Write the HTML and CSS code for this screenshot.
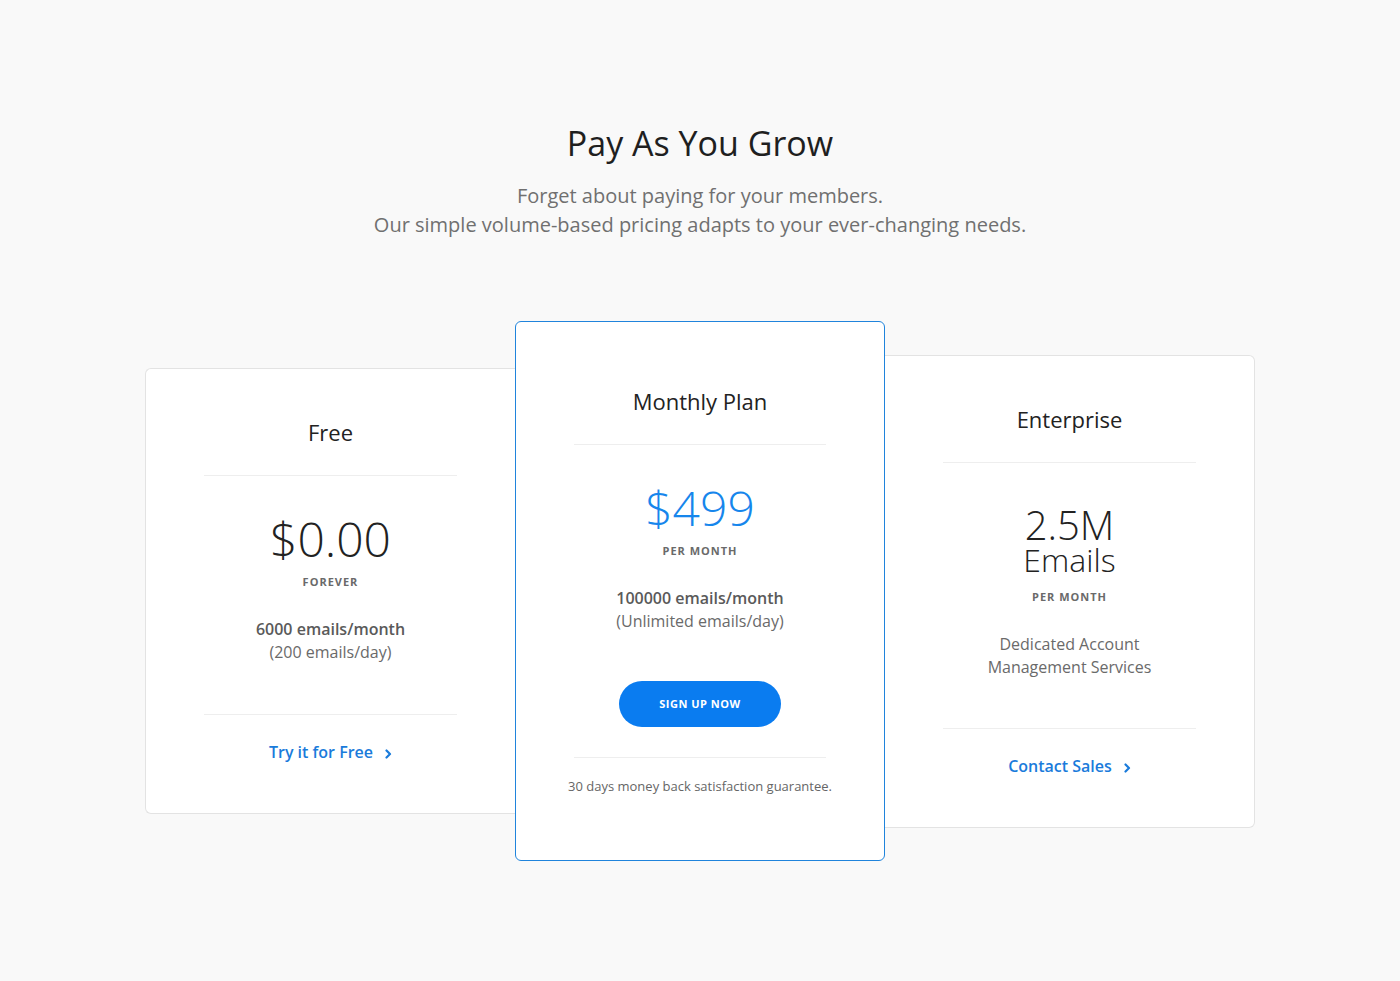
FILE: index.html
```html
<!DOCTYPE html>
<html lang="en">
<head>
<meta charset="utf-8">
<title>Pay As You Grow</title>
<link rel="stylesheet" href="styles.css">
</head>
<body>
<section class="pricing">
  <h1 class="pricing-title">Pay As You Grow</h1>
  <p class="pricing-lead">Forget about paying for your members.<br>Our simple volume-based pricing adapts to your ever-changing needs.</p>

  <div class="plans">
    <div class="plan plan-left">
      <div class="plan-head"><h2 class="plan-name">Free</h2></div>
      <div class="plan-body">
        <div class="plan-price">$0.00</div>
        <div class="plan-period">FOREVER</div>
        <p class="plan-desc"><span class="strong">6000 emails/month</span><br>(200 emails/day)</p>
      </div>
      <div class="plan-foot">
        <a class="plan-link" href="#">Try it for Free<svg class="chev" width="7" height="10" viewBox="0 0 7 10"><polyline points="1.5,1.5 5,5 1.5,8.5" fill="none" stroke="currentColor" stroke-width="2.2" stroke-linecap="round" stroke-linejoin="round"/></svg></a>
      </div>
    </div>

    <div class="plan plan-featured">
      <div class="plan-head"><h2 class="plan-name">Monthly Plan</h2></div>
      <div class="plan-body">
        <div class="plan-price price-blue">$499</div>
        <div class="plan-period">PER MONTH</div>
        <p class="plan-desc"><span class="strong">100000 emails/month</span><br>(Unlimited emails/day)</p>
        <a class="btn-signup" href="#">SIGN UP NOW</a>
      </div>
      <div class="plan-foot">
        <p class="guarantee">30 days money back satisfaction guarantee.</p>
      </div>
    </div>

    <div class="plan plan-right">
      <div class="plan-head"><h2 class="plan-name">Enterprise</h2></div>
      <div class="plan-body body-ent">
        <div class="ent-amount">2.5M</div>
        <div class="ent-unit">Emails</div>
        <div class="plan-period period-ent">PER MONTH</div>
        <p class="plan-desc">Dedicated Account<br>Management Services</p>
      </div>
      <div class="plan-foot">
        <a class="plan-link" href="#">Contact Sales<svg class="chev" width="7" height="10" viewBox="0 0 7 10"><polyline points="1.5,1.5 5,5 1.5,8.5" fill="none" stroke="currentColor" stroke-width="2.2" stroke-linecap="round" stroke-linejoin="round"/></svg></a>
      </div>
    </div>
  </div>
</section>
</body>
</html>
```

FILE: styles.css
```css
html, body {
  margin: 0;
  padding: 0;
  background: #f9f9f9;
  min-height: 100%;
}
body {
  font-family: "Open Sans", "Liberation Sans", sans-serif;
  color: #222;
  -webkit-font-smoothing: antialiased;
}
.pricing {
  padding-top: 123px;
  padding-bottom: 120px;
  text-align: center;
}
.pricing-title {
  margin: 0;
  font-size: 34px;
  line-height: 40px;
  font-weight: 400;
  color: #1f1f1f;
}
.pricing-lead {
  margin: 18px 0 0;
  font-size: 20px;
  line-height: 29px;
  font-weight: 400;
  color: #707070;
}
.plans {
  width: 1110px;
  margin: 82px auto 0;
  display: flex;
  align-items: center;
}
.plan {
  width: 370px;
  box-sizing: border-box;
  background: #fff;
  border: 1px solid #e3e3e3;
  padding: 0 58px;
}
.plan-left {
  border-right: 0;
  border-radius: 6px 0 0 6px;
}
.plan-right {
  border-left: 0;
  border-radius: 0 6px 6px 0;
}
.plan-featured {
  border: 1px solid #2084dc;
  border-radius: 6px;
  position: relative;
  z-index: 1;
}
.plan-head {
  padding: 48px 0 28px;
  border-bottom: 1px solid #eeeeee;
}
.plan-featured .plan-head {
  padding-top: 64px;
}
.plan-name {
  margin: 0;
  font-size: 22px;
  line-height: 30px;
  font-weight: 400;
  color: #222;
}
.plan-body {
  padding: 37px 0 50px;
  border-bottom: 1px solid #eeeeee;
}
.plan-featured .plan-body {
  padding-bottom: 30px;
}
.plan-price {
  font-size: 48px;
  line-height: 52px;
  font-weight: 300;
  color: #222;
}
.price-blue {
  color: #1686ec;
}
.plan-period {
  margin-top: 9px;
  font-size: 11px;
  line-height: 16px;
  font-weight: 700;
  letter-spacing: 1px;
  color: #6a6a6a;
}
.plan-desc {
  margin: 28px 0 0;
  font-size: 16px;
  line-height: 23px;
  color: #6a6a6a;
}
.plan-desc .strong {
  font-weight: 600;
  color: #5a5a5a;
}
.body-ent {
  padding-top: 42px;
  padding-bottom: 49px;
}
.ent-amount {
  font-size: 40px;
  line-height: 40px;
  font-weight: 300;
  color: #222;
}
.ent-unit {
  font-size: 32px;
  line-height: 30px;
  font-weight: 300;
  color: #222;
}
.period-ent {
  margin-top: 14px;
}
.btn-signup {
  display: block;
  width: 162px;
  height: 46px;
  margin: 48px auto 0;
  border-radius: 23px;
  background: #0a7cf0;
  color: #fff;
  font-size: 11px;
  font-weight: 700;
  letter-spacing: 0.5px;
  line-height: 46px;
  text-decoration: none;
}
.plan-foot {
  padding: 25px 0 49px;
}
.plan-featured .plan-foot {
  padding: 18px 0 64px;
}
.plan-link {
  display: inline-flex;
  align-items: center;
  font-size: 16px;
  line-height: 24px;
  font-weight: 600;
  color: #1a7bdb;
  text-decoration: none;
}
.chev {
  margin-left: 12px;
  margin-top: 4px;
  color: #1a7bdb;
}
.guarantee {
  margin: 0 -30px;
  font-size: 13px;
  line-height: 20px;
  color: #666;
  white-space: nowrap;
}
```
